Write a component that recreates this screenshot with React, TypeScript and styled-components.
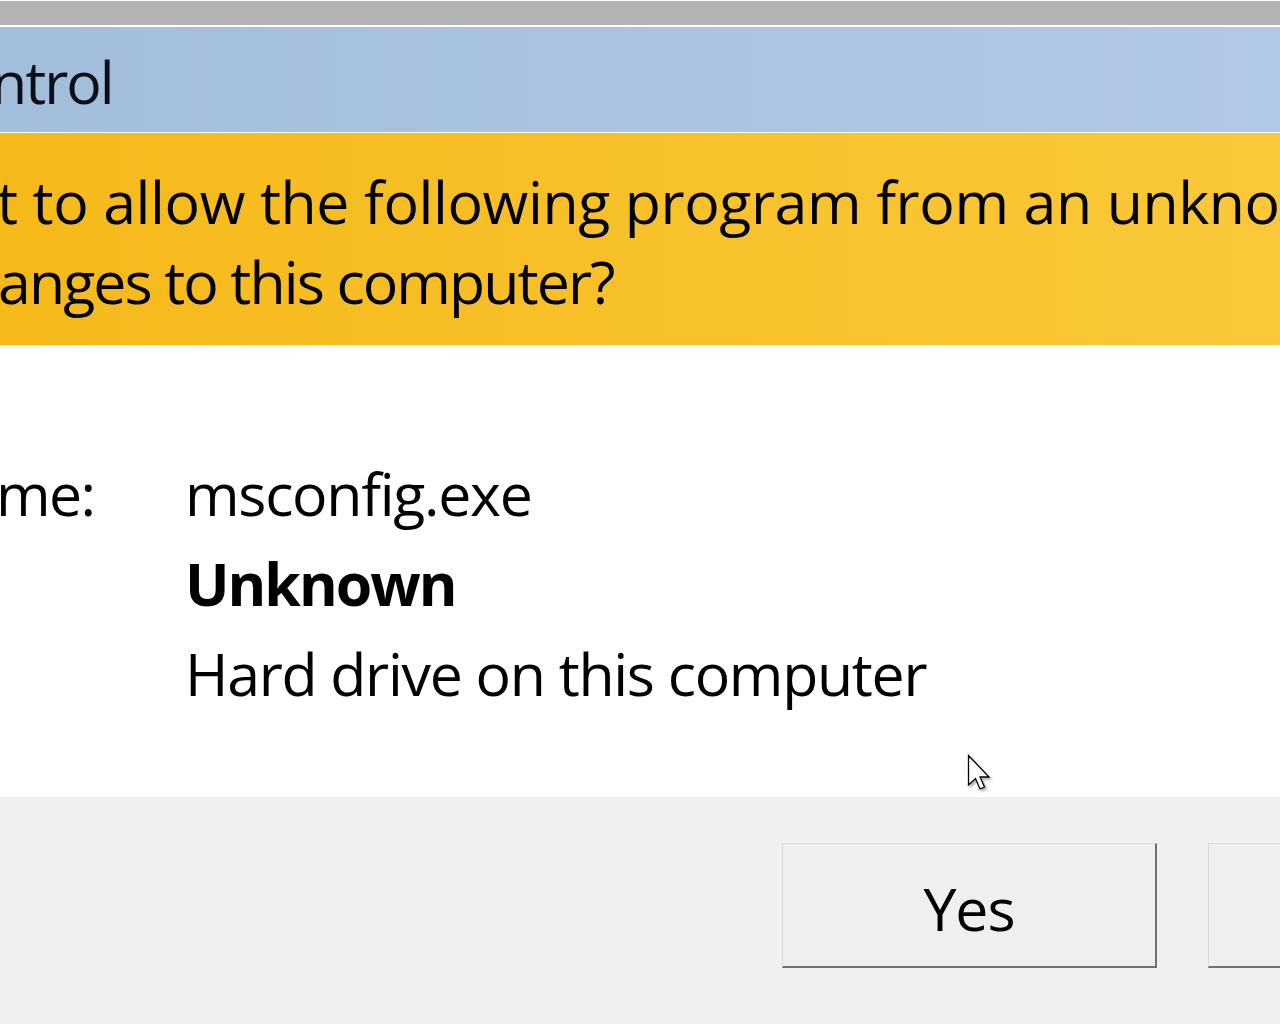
import React from 'react';
import styled, { createGlobalStyle } from 'styled-components';

const GlobalStyle = createGlobalStyle`
  html, body {
    margin: 0;
    padding: 0;
    background: #fff;
    overflow: hidden;
  }
  body {
    font-family: 'Segoe UI', 'Open Sans', 'Noto Sans', sans-serif;
    color: #000;
  }
`;

const Screen = styled.div`
  position: relative;
  display: flex;
  flex-direction: column;
  width: 1280px;
  height: 1024px;
  overflow: hidden;
  background: #fff;
`;

const FrameStrip = styled.div`
  height: 24px;
  margin-top: 1px;
  background: #b3b3b3;
  border-bottom: 2px solid #fff;
  flex-shrink: 0;
`;

const TitleBar = styled.div`
  height: 105px;
  flex-shrink: 0;
  display: flex;
  align-items: flex-end;
  background: linear-gradient(90deg, #a3bedb 0%, #a9c3e0 45%, #b1c9e6 100%);
  border-bottom: 1px solid #fff;
  overflow: hidden;
`;

type CutProps = { $cut?: number; $spacing?: number };

const TitleText = styled.div<CutProps>`
  font-size: 59px;
  line-height: 1;
  letter-spacing: -2px;
  padding-bottom: 21px;
  margin-left: ${(p) => (p.$cut ? -p.$cut : 0)}px;
  white-space: nowrap;
  color: #0a0f1a;
`;

const Banner = styled.div`
  height: 212px;
  flex-shrink: 0;
  display: flex;
  flex-direction: column;
  padding-top: 28px;
  box-sizing: border-box;
  background: linear-gradient(90deg, #f5b91a 0%, #f8c22b 55%, #fac839 100%);
  overflow: hidden;
`;

const BannerLine = styled.div<CutProps>`
  font-size: 59px;
  line-height: 80px;
  letter-spacing: ${(p) => p.$spacing ?? -0.4}px;
  white-space: nowrap;
  margin-left: ${(p) => (p.$cut ? -p.$cut : 0)}px;
`;

const Details = styled.div`
  height: 452px;
  flex-shrink: 0;
  display: grid;
  grid-template-columns: 185px auto;
  grid-auto-rows: 90px;
  align-content: start;
  padding-top: 103px;
  box-sizing: border-box;
  overflow: hidden;
`;

const Label = styled.div<CutProps>`
  font-size: 59px;
  line-height: 90px;
  letter-spacing: -1.6px;
  white-space: nowrap;
  margin-left: ${(p) => (p.$cut ? -p.$cut : 0)}px;
`;

const Value = styled.div<{ $bold?: boolean }>`
  font-size: 59px;
  line-height: 90px;
  letter-spacing: ${(p) => (p.$bold ? -2 : -1.3)}px;
  white-space: nowrap;
  font-weight: ${(p) => (p.$bold ? 700 : 400)};
`;

const Footer = styled.div`
  flex: 1;
  display: flex;
  align-items: flex-start;
  padding: 46px 0 0 782px;
  gap: 51px;
  background: #f0f0f0;
  overflow: hidden;
`;

const Button = styled.button`
  flex-shrink: 0;
  width: 375px;
  height: 125px;
  box-sizing: border-box;
  border-style: solid;
  border-width: 1px 2px 2px 1px;
  border-color: #d9d9d9 #707070 #707070 #d9d9d9;
  background: #efefef;
  font-family: inherit;
  font-size: 59px;
  letter-spacing: -1px;
  color: #000;
  padding: 6px 0 0 0;
`;

const Cursor = styled.svg`
  position: absolute;
  left: 967px;
  top: 754px;
  filter: drop-shadow(2px 2px 1px rgba(0, 0, 0, 0.3));
`;

export default function App() {
  return (
    <Screen>
      <GlobalStyle />
      <FrameStrip />
      <TitleBar>
        <TitleText $cut={9}>ntrol</TitleText>
      </TitleBar>
      <Banner>
        <BannerLine $cut={3}>t to allow the following program from an unknown publisher</BannerLine>
        <BannerLine $cut={2} $spacing={-1.9}>anges to this computer?</BannerLine>
      </Banner>
      <Details>
        <Label $cut={4}>me:</Label>
        <Value>msconfig.exe</Value>
        <Label />
        <Value $bold>Unknown</Value>
        <Label />
        <Value>Hard drive on this computer</Value>
      </Details>
      <Footer>
        <Button>Yes</Button>
        <Button>No</Button>
      </Footer>
      <Cursor width="28" height="40" viewBox="0 0 28 40">
        <path
          d="M1.5 1.5 L1.5 31 L8.5 24.5 L13 35 L17.5 33 L13 23 L22 23 Z"
          fill="#fff"
          stroke="#000"
          strokeWidth="1.3"
          strokeLinejoin="miter"
        />
      </Cursor>
    </Screen>
  );
}
